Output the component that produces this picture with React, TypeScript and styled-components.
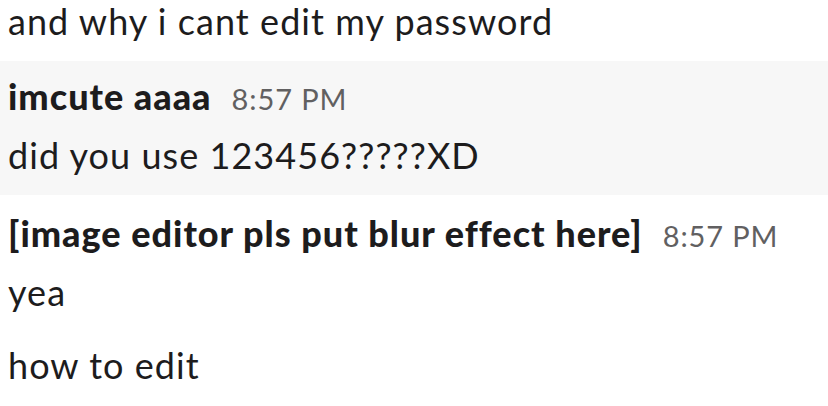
import React from 'react'
import styled, { createGlobalStyle } from 'styled-components'

const GlobalStyle = createGlobalStyle`
  html, body {
    margin: 0;
    padding: 0;
    background: #ffffff;
  }
  body {
    font-family: Lato, "Noto Sans", sans-serif;
    color: #1d1c1d;
  }
`

const Feed = styled.div`
  display: flex;
  flex-direction: column;
  width: 828px;
  height: 413px;
  margin-top: -7px;
  overflow: hidden;
`

const Message = styled.div<{ $hover?: boolean; $top: number; $bottom: number }>`
  padding: ${p => p.$top}px 8px ${p => p.$bottom}px 8px;
  background: ${p => (p.$hover ? '#f7f7f7' : 'transparent')};
`

const Header = styled.div`
  display: flex;
  align-items: baseline;
  gap: 20px;
  line-height: 57px;
`

const Sender = styled.span`
  font-size: 36px;
  font-weight: 900;
  letter-spacing: 1px;
  color: #1d1c1d;
`

const Time = styled.span`
  font-size: 29px;
  letter-spacing: 0.9px;
  color: #616061;
`

const Text = styled.div`
  font-size: 36px;
  line-height: 57px;
  letter-spacing: 1.05px;
`

interface Msg {
  sender?: string
  time?: string
  lines: string[]
  hover?: boolean
  top: number
  bottom: number
}

const messages: Msg[] = [
  { lines: ['and why i cant edit my password'], top: 0, bottom: 11 },
  { sender: 'imcute aaaa', time: '8:57 PM', lines: ['did you use 123456?????XD'], hover: true, top: 7, bottom: 11 },
  { sender: '[image editor pls put blur effect here]', time: '8:57 PM', lines: ['yea'], top: 10, bottom: 8 },
  { lines: ['how to edit'], top: 8, bottom: 0 },
]

export default function App() {
  return (
    <>
      <GlobalStyle />
      <Feed>
        {messages.map((m, i) => (
          <Message key={i} $hover={m.hover} $top={m.top} $bottom={m.bottom}>
            {m.sender && (
              <Header>
                <Sender>{m.sender}</Sender>
                <Time>{m.time}</Time>
              </Header>
            )}
            {m.lines.map((l, j) => (
              <Text key={j}>{l}</Text>
            ))}
          </Message>
        ))}
      </Feed>
    </>
  )
}
